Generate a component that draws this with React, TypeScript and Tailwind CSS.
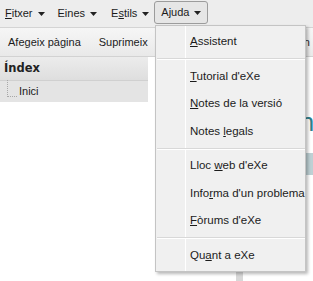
import React from "react";

const Caret = () => (
    <svg width="7" height="4" viewBox="0 0 7 4" className="ml-[5px] mt-[1px]" aria-hidden="true">
        <path d="M0 0h7L3.5 4z" fill="#222" />
    </svg>
);

type Item = { pre: string; key: string; post: string } | "sep";

const items: Item[] = [
    { pre: "", key: "A", post: "ssistent" },
    "sep",
    { pre: "", key: "T", post: "utorial d'eXe" },
    { pre: "", key: "N", post: "otes de la versió" },
    { pre: "Notes ", key: "l", post: "egals" },
    "sep",
    { pre: "Lloc ", key: "w", post: "eb d'eXe" },
    { pre: "Info", key: "r", post: "ma d'un problema" },
    { pre: "", key: "F", post: "òrums d'eXe" },
    "sep",
    { pre: "Qu", key: "a", post: "nt a eXe" },
];

const App = () => {
    return (
        <div className="relative w-[313px] h-[281px] overflow-hidden bg-white text-[11px] text-[#1b1b1b] font-['Liberation_Sans',Arial,sans-serif] whitespace-nowrap">
            {/* menubar */}
            <div className="flex items-center h-[28px] bg-[#ededed] border-b border-[#d4d4d4] pl-[5px]">
                <div className="flex items-center mr-[8px]">
                    <span><u>F</u>itxer</span>
                    <Caret />
                </div>
                <div className="flex items-center ml-[5px] mr-[14px]">
                    <span>Eines</span>
                    <Caret />
                </div>
                <div className="flex items-center mr-[5px]">
                    <span>E<u>s</u>tils</span>
                    <Caret />
                </div>
                <div className="flex items-center h-[23px] mt-[-2px] px-[6px] border border-[#9c9c9c] rounded-[3px] bg-[#e6e6e6]">
                    <span>Ajuda</span>
                    <Caret />
                </div>
            </div>

            <div className="flex h-[253px]">
                {/* left panel */}
                <div className="w-[153px] flex flex-col">
                    <div className="flex items-center h-[29px] bg-gradient-to-b from-[#f6f6f6] to-[#e9e9e9] border-b border-[#d2d2d2] pl-[8px] gap-[18px]">
                        <span>Afegeix pàgina</span>
                        <span>Suprimeix</span>
                    </div>
                    <div className="flex items-center h-[24px] bg-gradient-to-b from-[#ececec] to-[#dedede] border-b border-[#d0d0d0] pl-[4px] text-[11.5px] font-bold text-[#222] font-['DejaVu_Sans',sans-serif]">
                        Índex
                    </div>
                    <div className="flex items-end h-[21px] bg-[#e4e4e4] pl-[7px]">
                        <div className="w-[10px] h-[17px] mb-[5px] border-l border-b border-dotted border-[#a8a8a8]" />
                        <span className="ml-[2px] mb-[3px]">Inici</span>
                    </div>
                    <div className="flex-1 bg-white" />
                </div>
                <div className="w-[3px] bg-[#d6d6d6]" />
                {/* right panel */}
                <div className="flex-1 flex flex-col">
                    <div className="flex items-center h-[29px] bg-gradient-to-b from-[#f6f6f6] to-[#e9e9e9] border-b border-[#d2d2d2] pl-[150px]">
                        <span>un</span>
                    </div>
                    <div className="flex flex-1">
                        <div className="w-[88px]" />
                        <div className="w-[7px] bg-[#d8d8d8]" />
                        <div className="flex-1 flex flex-col pt-[52px] pl-[57px]">
                            <span className="text-[26px] leading-[26px] text-[#2c7f8c]">n</span>
                            <div className="mt-[18px] h-[22px] bg-[#bed0d4]" />
                        </div>
                    </div>
                </div>
            </div>

            {/* dropdown */}
            <div className="absolute left-[155px] top-[25px] w-[151px] bg-[#f0f0f0] border border-[#c4c4c4] shadow-[2px_2px_3px_rgba(0,0,0,0.28)] py-[2px] text-[11.5px]">
                <div className="absolute left-[29px] top-0 bottom-0 w-px bg-[#dedede] border-r border-white" />
                {items.map((it, i) =>
                    it === "sep" ? (
                        <div key={i} className="relative h-[7px] flex items-center pl-[1px]">
                            <div className="w-full h-[2px] border-t border-[#d8d8d8] bg-white" />
                        </div>
                    ) : (
                        <div key={i} className="relative flex items-center h-[27.5px] pl-[34px]">
                            <span>
                                {it.pre}
                                <u>{it.key}</u>
                                {it.post}
                            </span>
                        </div>
                    )
                )}
            </div>
        </div>
    );
};

export default App;
